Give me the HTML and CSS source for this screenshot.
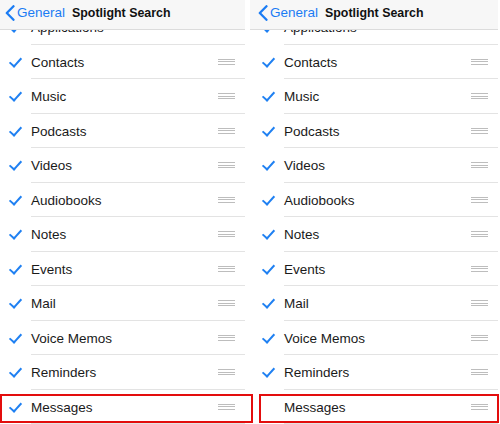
FILE: index.html
```html
<!DOCTYPE html>
<html>
<head>
<meta charset="utf-8">
<link rel="stylesheet" href="styles.css">
</head>
<body>
<div class="page">
  <section class="panel panel-left">
    <header class="nav">
      <svg class="chev" width="10" height="16" viewBox="0 0 10 16"><path d="M8.5 1.2 L1.8 8 L8.5 14.8" fill="none" stroke="#1b7cf4" stroke-width="2.3" stroke-linecap="round" stroke-linejoin="round"/></svg>
      <span class="back">General</span>
      <span class="title">Spotlight Search</span>
    </header>
    <div class="viewport">
      <ul class="list">
        <li class="row"><span class="check on"></span><span class="label">Applications</span><span class="grip"></span></li>
        <li class="row"><span class="check on"></span><span class="label">Contacts</span><span class="grip"></span></li>
        <li class="row"><span class="check on"></span><span class="label">Music</span><span class="grip"></span></li>
        <li class="row"><span class="check on"></span><span class="label">Podcasts</span><span class="grip"></span></li>
        <li class="row"><span class="check on"></span><span class="label">Videos</span><span class="grip"></span></li>
        <li class="row"><span class="check on"></span><span class="label">Audiobooks</span><span class="grip"></span></li>
        <li class="row"><span class="check on"></span><span class="label">Notes</span><span class="grip"></span></li>
        <li class="row"><span class="check on"></span><span class="label">Events</span><span class="grip"></span></li>
        <li class="row"><span class="check on"></span><span class="label">Mail</span><span class="grip"></span></li>
        <li class="row"><span class="check on"></span><span class="label">Voice Memos</span><span class="grip"></span></li>
        <li class="row"><span class="check on"></span><span class="label">Reminders</span><span class="grip"></span></li>
        <li class="row"><span class="check on"></span><span class="label">Messages</span><span class="grip"></span></li>
      </ul>
    </div>
  </section>
  <section class="panel panel-right">
    <header class="nav">
      <svg class="chev" width="10" height="16" viewBox="0 0 10 16"><path d="M8.5 1.2 L1.8 8 L8.5 14.8" fill="none" stroke="#1b7cf4" stroke-width="2.3" stroke-linecap="round" stroke-linejoin="round"/></svg>
      <span class="back">General</span>
      <span class="title">Spotlight Search</span>
    </header>
    <div class="viewport">
      <ul class="list">
        <li class="row"><span class="check on"></span><span class="label">Applications</span><span class="grip"></span></li>
        <li class="row"><span class="check on"></span><span class="label">Contacts</span><span class="grip"></span></li>
        <li class="row"><span class="check on"></span><span class="label">Music</span><span class="grip"></span></li>
        <li class="row"><span class="check on"></span><span class="label">Podcasts</span><span class="grip"></span></li>
        <li class="row"><span class="check on"></span><span class="label">Videos</span><span class="grip"></span></li>
        <li class="row"><span class="check on"></span><span class="label">Audiobooks</span><span class="grip"></span></li>
        <li class="row"><span class="check on"></span><span class="label">Notes</span><span class="grip"></span></li>
        <li class="row"><span class="check on"></span><span class="label">Events</span><span class="grip"></span></li>
        <li class="row"><span class="check on"></span><span class="label">Mail</span><span class="grip"></span></li>
        <li class="row"><span class="check on"></span><span class="label">Voice Memos</span><span class="grip"></span></li>
        <li class="row"><span class="check on"></span><span class="label">Reminders</span><span class="grip"></span></li>
        <li class="row"><span class="check"></span><span class="label">Messages</span><span class="grip"></span></li>
      </ul>
    </div>
  </section>
  <div class="highlight highlight-left"></div>
  <div class="highlight highlight-right"></div>
</div>
</body>
</html>
```
FILE: styles.css
```css
* { box-sizing: border-box; }
html, body {
  margin: 0;
  padding: 0;
  background: #fff;
}
body {
  width: 500px;
  height: 424px;
  overflow: hidden;
  font-family: "Liberation Sans", Arial, sans-serif;
  color: #1c1c1c;
}
.page {
  position: relative;
  width: 500px;
  height: 424px;
  display: flex;
  gap: 5px;
  overflow: hidden;
}
.panel {
  width: 248px;
  flex: none;
  height: 424px;
  display: flex;
  flex-direction: column;
  background: #fff;
}
.panel-left { margin-left: -3px; }

.nav {
  position: relative;
  z-index: 2;
  height: 30px;
  flex: none;
  background: #f7f7f7;
  border-bottom: 1px solid #dcdcdc;
  display: flex;
  align-items: center;
  padding-left: 8px;
  padding-bottom: 4px;
}
.chev { flex: none; margin-top: 1px; }
.back {
  font-size: 13.5px;
  color: #1b7cf4;
  margin-left: 2px;
}
.title {
  font-size: 12.4px;
  font-weight: bold;
  color: #111;
  margin-left: 7px;
}

.viewport {
  flex: 1;
  overflow: hidden;
}
.list {
  list-style: none;
  margin: -20px 0 0 0;
  padding: 0;
}
.row {
  height: 34.5px;
  display: flex;
  align-items: center;
  position: relative;
}
.row::after {
  content: "";
  position: absolute;
  left: 34px;
  right: 0;
  bottom: 0;
  height: 1px;
  background: #e3e3e3;
}
.check {
  width: 34px;
  flex: none;
  height: 10px;
  position: relative;
}
.check.on::before {
  content: "";
  position: absolute;
  left: 15px;
  top: -2px;
  width: 5px;
  height: 10px;
  border-right: 2px solid #1f80f2;
  border-bottom: 2px solid #1f80f2;
  transform: rotate(42deg);
}
.label {
  flex: 1;
  font-size: 13.5px;
  color: #1a1a1a;
  line-height: 1;
  padding-top: 1px;
}
.grip {
  flex: none;
  width: 17px;
  height: 6px;
  margin-right: 10px;
  background:
    linear-gradient(#bdbdbd, #bdbdbd) 0 0 / 100% 1px no-repeat,
    linear-gradient(#bdbdbd, #bdbdbd) 0 2.5px / 100% 1px no-repeat,
    linear-gradient(#bdbdbd, #bdbdbd) 0 5px / 100% 1px no-repeat;
}

.highlight {
  position: absolute;
  top: 394px;
  height: 29px;
  border: 2px solid #e30d0d;
  z-index: 3;
}
.highlight-left { left: 0; width: 253px; }
.highlight-right { left: 259px; width: 240px; }
```
